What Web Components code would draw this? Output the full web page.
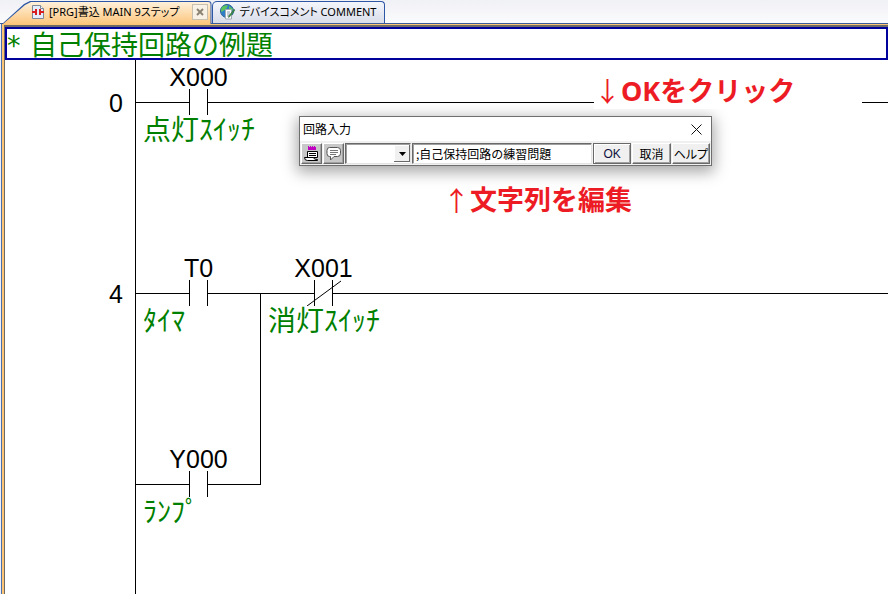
<!DOCTYPE html>
<html lang="ja">
<head>
<meta charset="utf-8">
<title>MAIN</title>
<style>
  html, body {
    height: 100%;
    margin: 0;
  }
  body {
    overflow: hidden;
    background: #fff;
    color: #000;
    font-family: "Liberation Sans", "Noto Sans CJK JP", sans-serif;
  }
</style>
</head>
<body>
<ladder-workspace>
  <editor-tab slot="tabs" active>
    <svg slot="icon" width="14" height="16" viewBox="0 0 14 16">
      <path d="M1.500 1.500h8l3 3v10h-11z" fill="#e4eefa" stroke="#7c8797"/>
      <path d="M9.500 1.500v3h3" fill="#fff" stroke="#7c8797"/>
      <path d="M1 8h3M10 8h3" stroke="#d81e1e" stroke-width="2"/>
      <path d="M5 5v6M9 5v6" stroke="#d81e1e" stroke-width="2"/>
    </svg>
    [PRG]書込 MAIN 9ステップ
  </editor-tab>
  <editor-tab slot="tabs">
    <svg slot="icon" width="16" height="16" viewBox="0 0 16 16">
      <circle cx="7" cy="7" r="6.500" fill="#2f7fc8" stroke="#2b5f92"/>
      <path d="M2 3q3-2.500 6-1.500L6 5 3 7 1 8q-.5-3 1-5zM9 2l4 3-1 3-3-2z" fill="#5cc45c"/>
      <path d="M5.500 5.500h6v9.500h-6z" fill="#fff" stroke="#a0a8b4"/>
      <path d="M7 8h3M7 10h3M7 12h3" stroke="#8d98ab"/>
      <path d="M15 6l-5 6.500-1.500 1 .5-2 5-6z" fill="#3f9b4b" stroke="#2a5c33" stroke-width=".5"/>
    </svg>
    デバイスコメント COMMENT
  </editor-tab>

  <ladder-statement>自己保持回路の例題</ladder-statement>

  <ladder-rung step="0">
    <ladder-contact device="X000">点灯ｽｲｯﾁ</ladder-contact>
  </ladder-rung>
  <ladder-rung step="4">
    <ladder-contact device="T0" branch="down">ﾀｲﾏ</ladder-contact>
    <ladder-contact device="X001" closed>消灯ｽｲｯﾁ</ladder-contact>
  </ladder-rung>
  <ladder-rung open>
    <ladder-contact device="Y000" branch="up">ﾗﾝﾌﾟ</ladder-contact>
  </ladder-rung>

  <circuit-dialog slot="overlay"></circuit-dialog>
  <callout-note slot="overlay" class="click" arrow="↓">OKをクリック</callout-note>
  <callout-note slot="overlay" class="edit" arrow="↑">文字列を編集</callout-note>
</ladder-workspace>

<script>
class LadderWorkspace extends HTMLElement {
  constructor() {
    super();
    this.attachShadow({ mode: 'open' }).innerHTML = `
      <style>
        :host {
          display: flex;
          flex-direction: column;
          position: relative;
          height: 100%;
          background: #eef0f6;
        }
        nav {
          display: flex;
          align-items: flex-end;
          flex: none;
          height: 23px;
          padding-left: 2px;
          background: linear-gradient(#f0f1f5, #fbfbfd);
          border-bottom: 1px solid #3c5f9c;
        }
        .frame {
          display: flex;
          flex: 1;
          min-height: 0;
          margin-left: 1px;
          border-left: 1px solid #4a6fae;
          background: #fcc475;
        }
        main {
          flex: 1;
          min-height: 0;
          margin: 1px 0 0 2px;
          overflow: hidden;
          border: solid #6d6a66;
          border-width: 2px 0 0 1px;
          background: #fff;
        }
        ::slotted(circuit-dialog) {
          position: absolute;
          left: 299px;
          top: 116px;
        }
        ::slotted(callout-note) {
          position: absolute;
        }
        ::slotted(.click) {
          left: 594px;
          top: 73px;
          width: 268px;
        }
        ::slotted(.edit) {
          left: 443px;
          top: 182px;
        }
      </style>
      <nav><slot name="tabs"></slot></nav>
      <div class="frame"><main><slot></slot></main></div>
      <slot name="overlay"></slot>`;
  }
}

class EditorTab extends HTMLElement {
  constructor() {
    super();
    this.attachShadow({ mode: 'open' }).innerHTML = `
      <style>
        :host {
          display: block;
          position: relative;
          height: 22px;
          font: 11px/22px "Noto Sans", "Noto Sans CJK JP", sans-serif;
          font-feature-settings: "palt";
          white-space: nowrap;
        }
        :host([active]) {
          margin-bottom: -1px;
          height: 23px;
        }
        .row {
          display: flex;
          align-items: center;
          position: relative;
          height: 22px;
          gap: 4px;
          padding: 0 8px;
        }
        :host([active]) .row {
          padding: 0 4px 0 29px;
        }
        .back {
          position: absolute;
          inset: 0;
          border: 1px solid #2d57a5;
          border-bottom: none;
          border-radius: 5px 4px 0 0;
          background: linear-gradient(#f4f6fc, #d9dde9);
        }
        :host([active]) .back {
          border: none;
          border-radius: 0 4px 0 0;
          background: #2d57a5;
          clip-path: polygon(0 100%, 22px 3px, 28px 0, 100% 0, 100% 100%);
        }
        :host([active]) .back::after {
          content: "";
          position: absolute;
          inset: 1px 1px 0 1px;
          border-radius: 0 3px 0 0;
          background: linear-gradient(#fff1dc, #fcc67c);
          clip-path: polygon(0 100%, 22px 3px, 28px 0, 100% 0, 100% 100%);
        }
        ::slotted(svg) {
          flex: none;
        }
        button {
          display: none;
          width: 16px;
          height: 16px;
          margin-left: 8px;
          padding: 0;
          border: 1px solid #c9bfae;
          background: #f7f1e6;
        }
        :host([active]) button {
          display: grid;
          place-items: center;
        }
      </style>
      <div class="back"></div>
      <div class="row">
        <slot name="icon"></slot>
        <span><slot></slot></span>
        <button aria-label="閉じる">
          <svg width="8" height="8" viewBox="0 0 8 8"><path d="M1 1l6 6M7 1L1 7" stroke="#8d8373" stroke-width="2"/></svg>
        </button>
      </div>`;
  }
}

class LadderStatement extends HTMLElement {
  constructor() {
    super();
    this.attachShadow({ mode: 'open' }).innerHTML = `
      <style>
        :host {
          display: flex;
          border: 2px solid #00009c;
          color: #008000;
          font-family: "Noto Sans CJK JP", sans-serif;
          font-size: 27px;
          line-height: 29px;
          white-space: nowrap;
        }
        .mark {
          width: 23px;
          font-family: "DejaVu Sans", sans-serif;
          line-height: 34px;
          height: 29px;
        }
      </style>
      <span class="mark">*</span>
      <span><slot></slot></span>`;
  }
}

class LadderRung extends HTMLElement {
  constructor() {
    super();
    this.attachShadow({ mode: 'open' }).innerHTML = `
      <style>
        :host {
          display: flex;
          height: 191px;
        }
        .step {
          flex: none;
          box-sizing: border-box;
          width: 131px;
          padding: 30px 12px 0 0;
          border-right: 1px solid #000;
          font-size: 25px;
          line-height: 27px;
          text-align: right;
        }
        .wire {
          flex: 1;
          height: 1px;
          margin-top: 42px;
          background: #000;
        }
        :host([open]) .wire {
          visibility: hidden;
        }
      </style>
      <div class="step">${this.getAttribute('step') ?? ''}</div>
      <slot></slot>
      <div class="wire"></div>`;
  }
}

class LadderContact extends HTMLElement {
  constructor() {
    super();
    const slash = this.hasAttribute('closed') ? '<path d="M46 26L80 1"/>' : '';
    this.attachShadow({ mode: 'open' }).innerHTML = `
      <style>
        :host {
          display: block;
          flex: none;
          position: relative;
          width: 125px;
          font-size: 25px;
        }
        .device {
          padding-top: 6px;
          line-height: 23px;
          text-align: center;
        }
        svg {
          display: block;
          fill: none;
          stroke: #000;
        }
        .comment {
          padding-left: 7px;
          color: #008000;
          font-family: "Noto Sans CJK JP", sans-serif;
          font-size: 28px;
          line-height: 26px;
          white-space: nowrap;
        }
        :host([branch])::after {
          content: "";
          position: absolute;
          right: 0;
          width: 1px;
          background: #000;
        }
        :host([branch="down"])::after {
          top: 42px;
          bottom: 0;
        }
        :host([branch="up"])::after {
          top: 0;
          height: 43px;
        }
      </style>
      <div class="device">${this.getAttribute('device')}</div>
      <svg width="125" height="26" viewBox="0 0 125 26">
        <path d="M0 13.500H53.500M53.500 0V26M71.500 0V26M71.500 13.500H125"/>${slash}
      </svg>
      <div class="comment"><slot></slot></div>`;
  }
}

class CircuitDialog extends HTMLElement {
  constructor() {
    super();
    this.attachShadow({ mode: 'open' }).innerHTML = `
      <style>
        :host {
          display: block;
          box-sizing: border-box;
          width: 413px;
          border: 1px solid #6e6e6e;
          background: #f0f0f0;
          box-shadow: 0 4px 14px 2px rgba(0, 0, 0, .35);
          font: 12px/16px "Noto Sans CJK JP", sans-serif;
        }
        header {
          display: flex;
          align-items: center;
          justify-content: space-between;
          height: 24px;
          padding: 0 9px 0 3px;
          background: #fff;
        }
        .close {
          display: grid;
          place-items: center;
          padding: 0;
          border: none;
          background: none;
        }
        form {
          display: flex;
          gap: 1px;
          height: 22px;
          padding: 2px 1px 0;
        }
        form > * {
          box-sizing: border-box;
          height: 21px;
          margin: 0;
          font: inherit;
          color: #000;
        }
        .tool, .push {
          display: grid;
          place-items: center;
          padding: 0;
          border: 1px solid;
          border-color: #fff #696969 #696969 #fff;
          box-shadow: inset -1px -1px #a0a0a0;
          background: #f0f0f0;
        }
        .tool {
          width: 21px;
          background: #c8c8c8;
        }
        .push {
          flex: 1;
          font-feature-settings: "palt";
        }
        .ok {
          border-color: #696969;
          box-shadow: inset 1px 1px #fff, inset -1px -1px #a0a0a0;
          font-family: "Liberation Sans", sans-serif;
          color: #101040;
        }
        .pick {
          display: flex;
          position: relative;
          width: 66px;
        }
        select, input {
          border: 1px solid;
          border-color: #696969 #e3e3e3 #e3e3e3 #696969;
          box-shadow: inset 1px 1px #a0a0a0;
          border-radius: 0;
          background: #fff;
        }
        select {
          flex: 1;
          appearance: none;
        }
        .pick svg {
          position: absolute;
          top: 2px;
          right: 1px;
          pointer-events: none;
        }
        input {
          width: 180px;
          padding: 0 3px;
        }
      </style>
      <header>
        <span>回路入力</span>
        <button class="close" aria-label="閉じる">
          <svg width="11" height="11" viewBox="0 0 11 11"><path d="M.5 .5l10 10M10.500 .5l-10 10" stroke="#111"/></svg>
        </button>
      </header>
      <form onsubmit="return false">
        <button type="button" class="tool" aria-label="連続入力">
          <svg width="16" height="17" viewBox="0 0 16 17">
            <path d="M4 1h1v1h1V1h1v1h1V1h1v1h1V1h1v1h1v3H4z" fill="#c000c0"/>
            <path d="M3.500 6.500h10v6h-10z" fill="#fff" stroke="#000"/>
            <path d="M5 8.500h7M5 10.500h7" stroke="#000"/>
            <path d="M.5 12.500h9q0 2 4 2v1h-10q-3 0-3-3z" fill="#fff" stroke="#000"/>
          </svg>
        </button>
        <button type="button" class="tool" aria-label="コメント入力">
          <svg width="16" height="16" viewBox="0 0 16 16">
            <path d="M3.500 1.500h8q3 0 3 3v3q0 3-3 3H8L4.500 14v-3.500h-1q-2.500 0-2.500-3v-3q0-3 2.500-3z" fill="#fff" stroke="#555"/>
            <path d="M4 4.500h8M4 6.500h8M4 8.500h6" stroke="#777"/>
          </svg>
        </button>
        <div class="pick">
          <select aria-label="回路記号"><option></option></select>
          <svg width="16" height="17" viewBox="0 0 16 17">
            <path d="M0 0h16v17H0z" fill="#696969"/>
            <path d="M0 0h15v16H0z" fill="#fff"/>
            <path d="M1 1h14v15H1z" fill="#f0f0f0"/>
            <path d="M5 7h7l-3.500 4z" fill="#000"/>
          </svg>
        </div>
        <input aria-label="デバイス" value=";自己保持回路の練習問題">
        <button class="push ok">OK</button>
        <button type="button" class="push">取消</button>
        <button type="button" class="push">ヘルプ</button>
      </form>`;
  }
}

class CalloutNote extends HTMLElement {
  constructor() {
    super();
    this.attachShadow({ mode: 'open' }).innerHTML = `
      <style>
        :host {
          display: flex;
          align-items: center;
          box-sizing: border-box;
          height: 36px;
          color: #ed1c24;
          font: bold 27px/36px "Noto Sans", "Noto Sans CJK JP", sans-serif;
          white-space: nowrap;
        }
        :host([arrow="↓"]) {
          background: #fff;
        }
        .arrow {
          width: 27px;
          font-family: "Noto Sans CJK JP", sans-serif;
          font-weight: normal;
          text-align: center;
        }
      </style>
      <span class="arrow">${this.getAttribute('arrow')}</span>
      <span><slot></slot></span>`;
  }
}

customElements.define('ladder-workspace', LadderWorkspace);
customElements.define('editor-tab', EditorTab);
customElements.define('ladder-statement', LadderStatement);
customElements.define('ladder-rung', LadderRung);
customElements.define('ladder-contact', LadderContact);
customElements.define('circuit-dialog', CircuitDialog);
customElements.define('callout-note', CalloutNote);
</script>
</body>
</html>
